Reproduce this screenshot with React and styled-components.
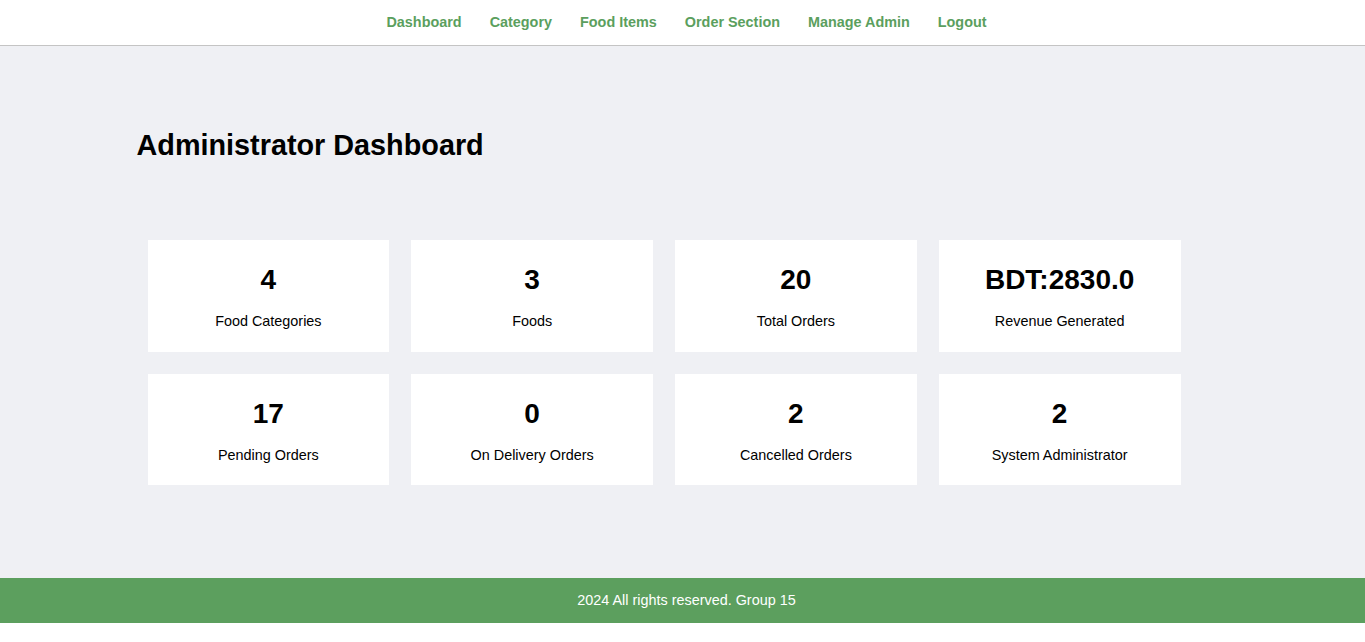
import React from "react";
import styled, { createGlobalStyle } from "styled-components";

const GlobalStyle = createGlobalStyle`
  html, body {
    margin: 0;
    padding: 0;
    background: #ffffff;
    font-family: "Liberation Sans", Arial, sans-serif;
  }
  * { box-sizing: border-box; }
`;

const Header = styled.header`
  height: 46px;
  background: #ffffff;
  border-bottom: 1px solid #c4c4c4;
  display: flex;
  align-items: center;
  justify-content: center;
  padding: 0 0 2px 8px;
`;

const Nav = styled.nav`
  display: flex;
  gap: 28px;
`;

const NavLink = styled.a`
  color: #5b9f5e;
  font-size: 14.4px;
  font-weight: bold;
  text-decoration: none;
  cursor: pointer;
`;

const Main = styled.main`
  background: #eff0f4;
  height: 532px;
  padding-top: 83px;
`;

const Container = styled.div`
  width: 80%;
  margin: 0 auto;
`;

const Title = styled.h1`
  margin: 0 0 78px;
  font-size: 28.8px;
  font-weight: bold;
  color: #000;
`;

const Grid = styled.div`
  display: grid;
  grid-template-columns: repeat(4, 241.75px);
  grid-auto-rows: 111.5px;
  gap: 22px;
  margin-left: 11px;
`;

const Card = styled.div`
  background: #ffffff;
  display: flex;
  flex-direction: column;
  align-items: center;
  padding-top: 24px;
`;

const Value = styled.div`
  font-size: 28px;
  font-weight: bold;
  color: #000;
  margin-bottom: 17px;
`;

const Label = styled.div`
  font-size: 14.4px;
  color: #000;
`;

const Footer = styled.footer`
  height: 45px;
  background: #5c9f5e;
  color: #ffffff;
  font-size: 14.4px;
  display: flex;
  align-items: center;
  justify-content: center;
  padding: 0 0 2px 8px;
`;

const links = ["Dashboard", "Category", "Food Items", "Order Section", "Manage Admin", "Logout"];

const stats = [
  { value: "4", label: "Food Categories" },
  { value: "3", label: "Foods" },
  { value: "20", label: "Total Orders" },
  { value: "BDT:2830.0", label: "Revenue Generated" },
  { value: "17", label: "Pending Orders" },
  { value: "0", label: "On Delivery Orders" },
  { value: "2", label: "Cancelled Orders" },
  { value: "2", label: "System Administrator" },
];

export default function App() {
  return (
    <>
      <GlobalStyle />
      <Header>
        <Nav>
          {links.map((l) => (
            <NavLink key={l}>{l}</NavLink>
          ))}
        </Nav>
      </Header>
      <Main>
        <Container>
          <Title>Administrator Dashboard</Title>
          <Grid>
            {stats.map((s, i) => (
              <Card key={i}>
                <Value>{s.value}</Value>
                <Label>{s.label}</Label>
              </Card>
            ))}
          </Grid>
        </Container>
      </Main>
      <Footer>2024 All rights reserved. Group 15</Footer>
    </>
  );
}
